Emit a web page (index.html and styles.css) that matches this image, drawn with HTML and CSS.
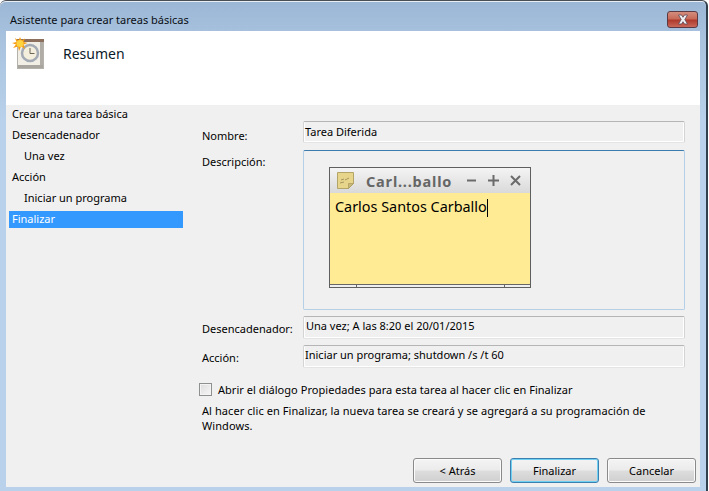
FILE: index.html
```html
<!DOCTYPE html>
<html lang="es">
<head>
<meta charset="utf-8">
<title>Asistente para crear tareas básicas</title>
<link rel="stylesheet" href="styles.css">
</head>
<body>
<div class="window">
  <div class="titlebar">
    <span class="title">Asistente para crear tareas básicas</span>
    <button class="close" aria-label="Cerrar">
      <svg width="18" height="11" viewBox="0 0 18 11"><path d="M4.500 1h3L9 3.300 10.500 1h3L10.800 5.500 13.500 10h-3L9 7.700 7.500 10h-3l2.700-4.500z" fill="#f2f2f4" stroke="#5b4a58" stroke-width=".8"/></svg>
    </button>
  </div>
  <div class="client">
    <header class="header">
      <svg class="task-icon" width="33" height="33" viewBox="0 0 33 33">
        <rect x="5.500" y="2.500" width="26" height="29" fill="#f1eee6" stroke="#b5b2ab"/>
        <rect x="5" y="2" width="27" height="3" fill="#8c6f5c"/>
        <rect x="28" y="5" width="3" height="26" fill="#b0ada7"/>
        <rect x="6" y="28" width="25" height="3" fill="#a8a59e"/>
        <circle cx="18" cy="16" r="8" fill="#f4efdd" stroke="#a3aab4" stroke-width="2.500"/>
        <path d="M18 11v5.500h4.500" fill="none" stroke="#6b6557" stroke-width="1"/>
        <path d="M8 0l1.500 3.500L13 1.500l-1.500 3.500L15.500 6l-4 1.500L13 12 9 9.500 7 14 6 9.500 1 11l3-3.500L0 6l4.500-1L3 1l3.500 2.500z" fill="#f59c12"/>
        <circle cx="8" cy="6.500" r="3.500" fill="#ffd23f"/>
      </svg>
      <h1 class="heading">Resumen</h1>
    </header>
    <div class="main">
      <nav class="nav">
        <div class="step">Crear una tarea básica</div>
        <div class="step">Desencadenador</div>
        <div class="step sub">Una vez</div>
        <div class="step">Acción</div>
        <div class="step sub">Iniciar un programa</div>
        <div class="step current">Finalizar</div>
      </nav>
      <section class="content">
        <div class="row row-name">
          <label class="label">Nombre:</label>
          <div class="field">Tarea Diferida</div>
        </div>
        <div class="row row-desc">
          <label class="label">Descripción:</label>
          <div class="desc">
            <div class="note">
              <div class="note-bar">
                <svg class="note-icon" width="17" height="17" viewBox="0 0 17 17">
                  <path d="M.5.500h16v11l-5 5h-11z" fill="#e8d58c" stroke="#b3a468"/>
                  <path d="M16.500 11.500h-5v5z" fill="#c9b878" stroke="#a8995f" stroke-width=".7"/>
                  <path d="M3 11l4-1M8 8l4-2M4 8l3-1" stroke="#a6965e" fill="none"/>
                </svg>
                <span class="note-title">Carl...ballo</span>
                <span class="note-controls">
                  <svg width="11" height="11" viewBox="0 0 11 11"><path d="M1 5.500h9" stroke="#6b6b6b" stroke-width="2"/></svg>
                  <svg width="11" height="11" viewBox="0 0 11 11"><path d="M0 5.500h11M5.500 0v11" stroke="#6b6b6b" stroke-width="2"/></svg>
                  <svg width="11" height="11" viewBox="0 0 11 11"><path d="M1 1l9 9M10 1l-9 9" stroke="#6b6b6b" stroke-width="2"/></svg>
                </span>
              </div>
              <div class="note-body"><span class="note-text">Carlos Santos Carballo</span><span class="caret"></span></div>
              <div class="note-foot"><span class="grip"></span><span class="grip-mid"></span><span class="grip"></span></div>
            </div>
          </div>
        </div>
        <div class="row row-trigger">
          <label class="label">Desencadenador:</label>
          <div class="field">Una vez; A las 8:20 el 20/01/2015</div>
        </div>
        <div class="row row-action">
          <label class="label">Acción:</label>
          <div class="field">Iniciar un programa; shutdown /s /t 60</div>
        </div>
        <div class="check-row">
          <span class="checkbox"></span>
          <span class="check-text">Abrir el diálogo Propiedades para esta tarea al hacer clic en Finalizar</span>
        </div>
        <p class="info">Al hacer clic en Finalizar, la nueva tarea se creará y se agregará a su programación de Windows.</p>
        <div class="buttons">
          <button class="btn">&lt; Atrás</button>
          <button class="btn primary">Finalizar</button>
          <button class="btn">Cancelar</button>
        </div>
      </section>
    </div>
  </div>
</div>
</body>
</html>
```

FILE: styles.css
```css
* { box-sizing: border-box; }
html, body { margin: 0; height: 100%; background: #fff; }
body {
  width: 709px;
  height: 491px;
  overflow: hidden;
  font-family: "Noto Sans", "Open Sans", sans-serif;
  font-size: 11px;
  color: #000;
}
.window {
  width: 708px;
  height: 491px;
  display: flex;
  flex-direction: column;
  padding: 0 6px 4px 6px;
  background: linear-gradient(#9bb7d5 0, #a9c3df 40px, #b9d1ea 120px);
  border-top: 1px solid #4a4f55;
  border-right: 2px solid #2f3f4c;
  border-radius: 6px 6px 0 0;
  box-shadow: inset 0 1px 0 #e8eef5;
}
.titlebar {
  flex: none;
  height: 30px;
  display: flex;
  align-items: center;
  justify-content: space-between;
  padding: 6px 2px 0 4px;
}
.title { font-size: 11px; color: #0a0f14; }
.close {
  align-self: flex-start;
  width: 31px;
  height: 17px;
  margin: 4px 0 0;
  padding: 0;
  display: flex;
  align-items: center;
  justify-content: center;
  border: 1px solid #5c3a44;
  border-radius: 3px;
  background: linear-gradient(#d48d7d 0, #c76a59 45%, #ae3a2c 55%, #c9685a 100%);
}
.client {
  flex: 1;
  min-height: 0;
  display: flex;
  flex-direction: column;
  background: #f0f0f0;
}
.header {
  flex: none;
  height: 74px;
  display: flex;
  align-items: flex-start;
  background: #fff;
  padding: 6px 0 0 6px;
}
.task-icon { flex: none; }
.heading {
  margin: 7px 0 0 18px;
  font-size: 14px;
  font-weight: 400;
  color: #0a1a2a;
}
.main { flex: 1; display: flex; min-height: 0; }
.nav { flex: none; width: 177px; padding: 0 0 0 3px; }
.step { height: 21px; padding: 1px 0 0 3px; line-height: 16px; }
.step.sub { padding-left: 15px; }
.step.current {
  height: 17px;
  margin-top: 1px;
  padding-top: 0;
  background: #3399ff;
  color: #fff;
}
.content { flex: 1; min-width: 0; padding: 16px 16px 0 19px; }
.row {
  display: grid;
  grid-template-columns: 101px 382px;
}
.label { padding-top: 5px; }
.row-name { height: 22px; margin-bottom: 7px; }
.row-name .label { padding-top: 7px; }
.row-name .field { padding-top: 2px; }
.row-desc { height: 160px; margin-bottom: 6px; }
.row-desc .label { padding-top: 4px; line-height: 16px; }
.row-trigger { height: 23px; margin-bottom: 6px; }
.row-trigger .field { padding-left: 2px; }
.row-action { height: 23px; margin-bottom: 15px; }
.field {
  background: #f0f0f0;
  border: 1px solid #d4d4d4;
  border-top-color: #b5b5b5;
  border-bottom-color: #e4e4e4;
  border-radius: 2px;
  box-shadow: inset 0 -1px 0 #fff, inset -1px 0 0 #fff, inset 1px 0 0 #fff;
  padding: 1px 1px;
  line-height: 16px;
}
.desc {
  background: #f0f0f0;
  border: 1px solid #b5cfe7;
  border-top-color: #3d7bad;
  border-radius: 2px;
  padding: 16px 0 0 25px;
}
.note {
  width: 202px;
  height: 121px;
  border: 1px solid #5f5f5f;
  display: flex;
  flex-direction: column;
  background: #ffeb94;
}
.note-bar {
  flex: none;
  height: 25px;
  display: flex;
  align-items: center;
  background: linear-gradient(#f4f4f4, #d9d9d9);
  padding: 0 9px 0 7px;
}
.note-icon { flex: none; }
.note-title {
  margin-left: 12px;
  font-size: 14.500px;
  font-weight: 700;
  letter-spacing: .8px;
  color: #666;
  flex: 1;
  white-space: nowrap;
}
.note-controls { display: flex; gap: 11px; }
.note-body {
  flex: 1;
  padding: 4px 5px 0;
  font-size: 14.400px;
  line-height: 20px;
  color: #000;
  display: flex;
  align-items: flex-start;
}
.caret { width: 1px; height: 18px; margin-top: 2px; background: #000; }
.note-foot {
  flex: none;
  height: 3px;
  display: flex;
  border-top: 1px solid #666;
  background: #efefef;
}
.grip { width: 26px; }
.grip:last-child { border-left: 1px solid #666; }
.grip-mid { flex: 1; border-left: 1px solid #666; }
.check-row { display: flex; align-items: center; gap: 6px; height: 13px; margin-left: -3px; }
.check-text { letter-spacing: .04px; }
.checkbox {
  flex: none;
  width: 13px;
  height: 13px;
  border: 1px solid #8e8f8f;
  background: linear-gradient(135deg, #dcdcdc, #f7f7f7);
  box-shadow: inset 0 0 0 1px #f4f4f4;
}
.info { margin: 7px 0 0; line-height: 15px; width: 470px; letter-spacing: .07px; }
.buttons {
  display: flex;
  gap: 8px;
  margin-top: 25px;
  margin-left: 211px;
  margin-right: -11px;
}
.btn {
  flex: none;
  width: 89px;
  height: 25px;
  padding: 0;
  font: inherit;
  color: #000;
  border: 1px solid #8a8a8a;
  border-radius: 3px;
  background: linear-gradient(#f4f4f4 0, #ebebeb 48%, #dddddd 52%, #cfcfcf 100%);
  box-shadow: inset 0 0 0 1px #fbfbfb;
}
.btn.primary {
  border-color: #3c7fb1;
  box-shadow: inset 0 0 0 1px #6fd0f2;
}
```
